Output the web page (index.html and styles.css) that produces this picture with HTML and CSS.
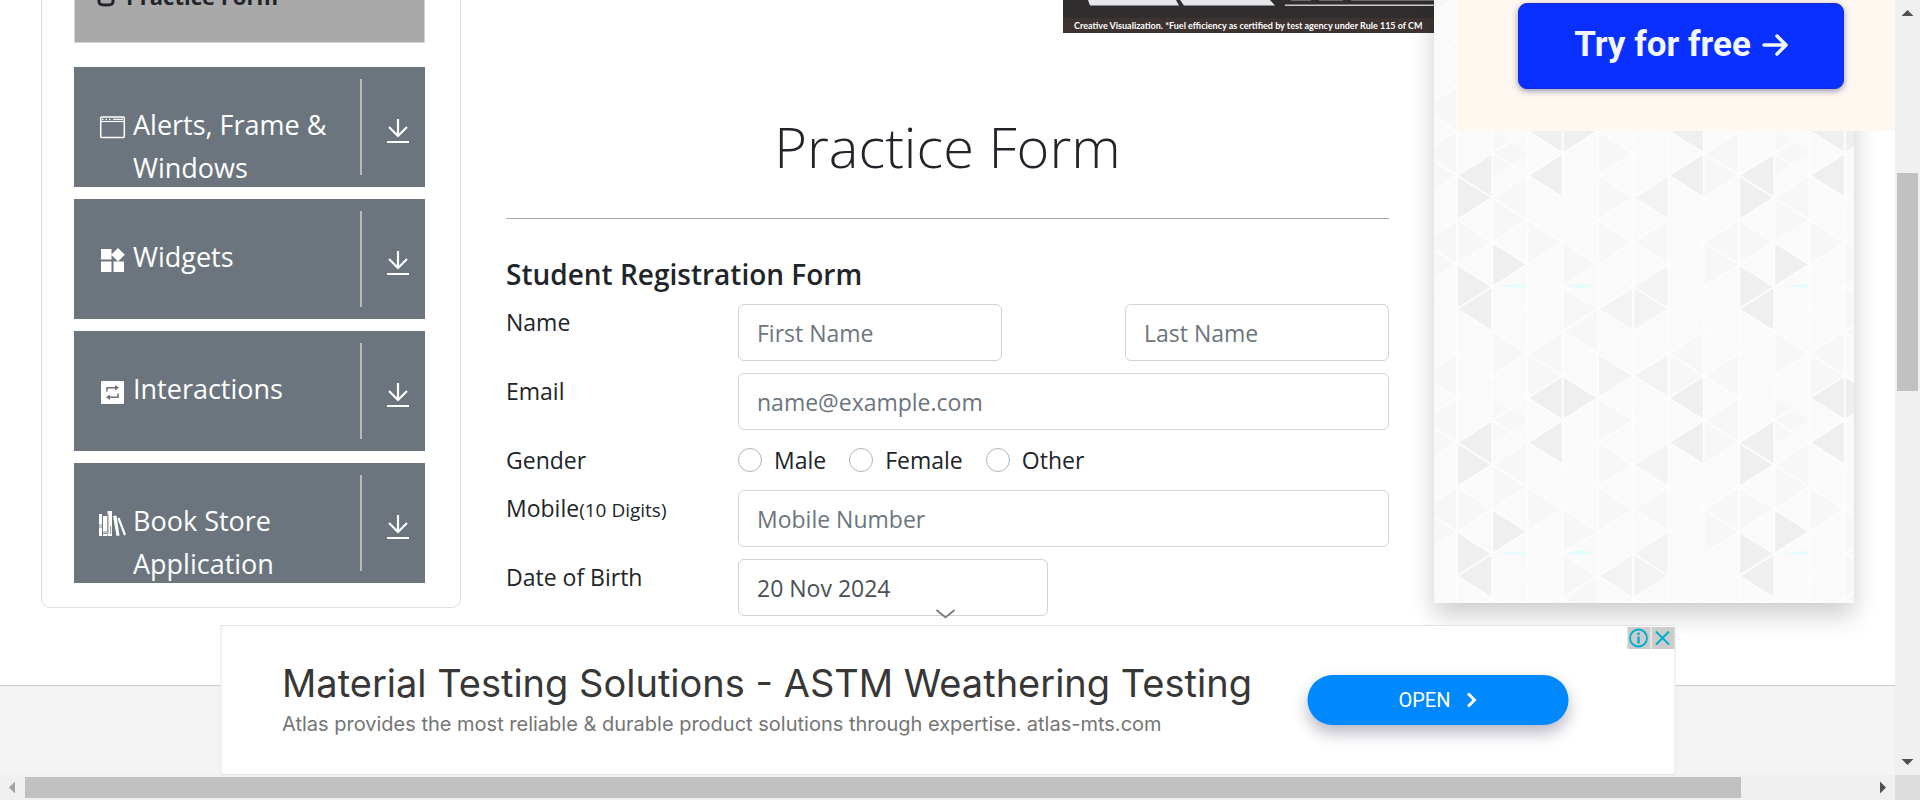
FILE: index.html
```html
<!DOCTYPE html>
<html lang="en">
<head>
<meta charset="utf-8">
<title>Practice Form</title>
<link rel="stylesheet" href="styles.css">
</head>
<body>
<svg class="defs" aria-hidden="true">
  <symbol id="download" viewBox="0 0 24 26" fill="none" stroke="currentColor">
    <path stroke-width="2.2" d="M12 1v17M3 9l9 9 9-9M1 24h22"/>
  </symbol>
</svg>
<div class="window">
  <div class="page">
    <div class="layout">
      <aside class="sidebar">
        <a class="current" href="#">
          <svg class="current-icon" viewBox="0 0 18 26"><path fill="none" stroke="currentColor" stroke-width="3" d="M2 4v17c0 4 14 4 14 0V4c0-3-14-3-14 0c0 4 14 4 14 0"/></svg>
          Practice Form
        </a>
        <nav class="groups">
          <button class="group" type="button">
            <svg class="group-icon" viewBox="0 0 28 28"><rect x="2.700" y="4" width="23.600" height="20.400" rx="1" fill="none" stroke="#fff" stroke-width="1.500"/><path fill="none" stroke="#fff" d="M3 8.500h23" stroke-width="1.200"/><path fill="none" stroke="#fff" stroke-width="1.200" stroke-dasharray="1.500 2" d="M4 6.300h9"/><path stroke="#fff" stroke-width="1.200" d="M15 6.300h10"/></svg>
            <span class="group-name">Alerts, Frame &amp; Windows</span>
            <span class="group-toggle"><svg class="download"><use href="#download"/></svg></span>
          </button>
          <button class="group" type="button">
            <svg class="group-icon" viewBox="0 0 28 28" fill="#fff"><path d="M3 4h10.500v10.500H3zM3 16.500h10.500v10.500H3zM15.500 16.500h10.500v10.500H15.500zM20 3l6.800 6.800-6.800 6.800-6.800-6.800z"/></svg>
            <span class="group-name">Widgets</span>
            <span class="group-toggle"><svg class="download"><use href="#download"/></svg></span>
          </button>
          <button class="group" type="button">
            <svg class="group-icon" viewBox="0 0 28 28"><rect x="3" y="4" width="23" height="23" rx="1" fill="#fff"/><g fill="none" stroke="#6c757d" stroke-width="1.600"><path d="M9 14.500v-3.700h9.500M20 16.500v3.700h-9.500"/></g><path fill="#6c757d" d="M17 8l4 2.800-4 2.800zM12 17.400l-4 2.800 4 2.800z"/></svg>
            <span class="group-name">Interactions</span>
            <span class="group-toggle"><svg class="download"><use href="#download"/></svg></span>
          </button>
          <button class="group" type="button">
            <svg class="group-icon" viewBox="0 0 28 28"><path fill="#fff" d="M1 5h3v22H1zM5 7h4v20H5zM9.500 2h4.500v25H9.500zM15 7l3.500-.5 3 20-3 .5zM19.500 9.500l2-1 6.500 17-2 1z"/><path stroke="#6c757d" stroke-width=".8" d="M1 16h3M1 18h3M5 23h4M10 4.500v20M12.600 17v8M5 24.500h4"/></svg>
            <span class="group-name">Book Store Application</span>
            <span class="group-toggle"><svg class="download"><use href="#download"/></svg></span>
          </button>
        </nav>
      </aside>

      <main class="main">
        <div class="banner">
          <svg class="banner-art" viewBox="0 0 371 18" preserveAspectRatio="xMinYMin slice">
            <rect width="371" height="18" fill="#302d2e"/>
            <path fill="#e6e7ea" d="M25 0h88l3 5.500H27zM117 0h90l5 5.500H121z"/>
            <path stroke="#c9c9c9" stroke-width="1.500" d="M222 5.200h149"/>
            <path stroke="#6d6a68" d="M228 .5h20M256 .5h24M288 .5h83"/>
          </svg>
          <p class="banner-note">Creative Visualization. *Fuel efficiency as certified by test agency under Rule 115 of CM</p>
        </div>
        <h1 class="title">Practice Form</h1>
        <form class="form">
          <h2 class="subtitle">Student Registration Form</h2>
          <div class="row">
            <label for="first">Name</label>
            <div class="names">
              <input class="field" id="first" type="text" placeholder="First Name">
              <input class="field" type="text" placeholder="Last Name" aria-label="Last Name">
            </div>
          </div>
          <div class="row">
            <label for="email">Email</label>
            <input class="field" id="email" type="email" placeholder="name@example.com">
          </div>
          <div class="row">
            <span>Gender</span>
            <div class="choices">
              <label class="choice"><input type="radio" name="gender">Male</label>
              <label class="choice"><input type="radio" name="gender">Female</label>
              <label class="choice"><input type="radio" name="gender">Other</label>
            </div>
          </div>
          <div class="row">
            <label for="mobile">Mobile<small>(10 Digits)</small></label>
            <input class="field" id="mobile" type="text" placeholder="Mobile Number">
          </div>
          <div class="row">
            <label for="birth">Date of Birth</label>
            <input class="field date" id="birth" type="text" value="20 Nov 2024">
          </div>
        </form>
      </main>

      <aside class="side-ad">
        <svg class="texture" aria-hidden="true">
          <defs>
            <pattern id="facets" width="282" height="267" patternUnits="userSpaceOnUse" patternTransform="translate(23 131)">
              <rect width="282" height="267" fill="#fafafa"/>
              <g transform="scale(35.250 22.250)">
                <path fill="#f7f7f7" d="M1 0l1 1-1 1zM2 2v2l-1-1zM4 0l1 1-1 1zM4 2l1 1-1 1zM4 4l1 1-1 1zM6 4v2l-1-1zM8 4v2l-1-1zM8 0v2l-1-1zM0 4l1 1-1 1zM2 4l1 1-1 1zM3 5l1 1-1 1zM7 5l1 1-1 1zM1 9l1 1-1 1zM3 9v2l-1-1zM7 9v2l-1-1zM6 10l1 1-1 1zM2 10l1 1-1 1zM4 8v2l-1-1zM7 1l1 1-1 1zM1 3l1 1-1 1zM8 10v2l-1-1zM3 7l1 1-1 1zM6 4v2l-1-1z"/>
                <path fill="#f3f3f3" d="M6 2v2l-1-1zM6 6v2l-1-1zM5 7v2l-1-1zM5 7l1 1-1 1zM4 10l1 1-1 1zM6 10v2l-1-1z"/>
                <path fill="#efefef" d="M1 1v2L0 2zM0 2l1 1-1 1zM3 1v2L2 2zM7 1v2L6 2zM1 5l1 1-1 1zM0 6l1 1-1 1zM1 7v2L0 8zM3 0v1L2 0zM3 11v1H2zM3 0v1l1-1zM3 11v1h1zM7 0v1L6 0zM7 11v1H6z"/>
              </g>
              <path fill="none" stroke="#fdfdfd" stroke-width="2" d="M0 0v267M35.250 0v267M70.500 0v267M105.750 0v267M141 0v267M176.250 0v267M211.500 0v267M246.750 0v267M282 0v267M0 0L282 178M0 44.500L282 222.500M0 89L282 267M0 133.500L211.500 267M0 178L141 267M0 222.500L70.500 267M70.500 0L282 133.500M141 0L282 89M211.500 0L282 44.500M282 0L0 178M282 44.500L0 222.500M282 89L0 267M282 133.500L70.500 267M282 178L141 267M282 222.500L211.500 267M211.500 0L0 133.500M141 0L0 89M70.500 0L0 44.500"/>
              <path fill="#e4fcfc" d="M42 155l27-2v4zM110 155l15-3 15 3-15 2z"/>
            </pattern>
          </defs>
          <rect width="100%" height="100%" fill="url(#facets)"/>
        </svg>
        <div class="offer">
          <a class="offer-link" href="#">Try for free
            <svg class="offer-arrow" viewBox="0 0 26 22" fill="none" stroke="currentColor" stroke-width="3.500" stroke-linecap="round" stroke-linejoin="round"><path d="M2 11h21M15 2l9 9-9 9"/></svg>
          </a>
        </div>
      </aside>
    </div>
    <footer class="footer"></footer>

    <section class="anchor-ad">
      <button class="collapse" type="button" aria-label="Collapse ad"><svg viewBox="0 0 20 10" fill="none" stroke="#777" stroke-width="1.700"><path d="M1 1l9 7.500L19 1"/></svg></button>
      <div class="anchor-copy">
        <p class="anchor-title">Material Testing Solutions - ASTM Weathering Testing</p>
        <p class="anchor-text">Atlas provides the most reliable &amp; durable product solutions through expertise. atlas-mts.com</p>
      </div>
      <a class="open" href="#">OPEN <svg class="open-arrow" viewBox="0 0 10 16" fill="none" stroke="#fff" stroke-width="3"><path d="M1.500 1.500L8 8l-6.500 6.500"/></svg></a>
      <div class="ad-controls">
        <button type="button" aria-label="Ad information"><svg viewBox="0 0 22 22" fill="none" stroke="#00aecd" stroke-width="1.800"><circle cx="11" cy="11" r="8.500"/><path stroke-width="2.400" d="M11 9.500v7M11 5.500v2.400"/></svg></button>
        <button type="button" aria-label="Close ad"><svg viewBox="0 0 22 22" fill="none" stroke="#00aecd" stroke-width="2"><path d="M4.500 4.500l13 13M17.500 4.500l-13 13"/></svg></button>
      </div>
    </section>
  </div>

  <div class="bar bar-vertical">
    <svg class="bar-arrow" viewBox="0 0 25 25"><path fill="#505050" d="M12.500 10l6 6h-12z"/></svg>
    <div class="space-before"></div><div class="thumb-vertical"></div><div class="space-after"></div>
    <svg class="bar-arrow" viewBox="0 0 25 25"><path fill="#505050" d="M12.500 15l6-6h-12z"/></svg>
  </div>
  <div class="bar bar-horizontal">
    <svg class="bar-arrow" viewBox="0 0 25 25"><path fill="#a3a3a3" d="M9 12.500l6-6v12z"/></svg>
    <div class="thumb-horizontal"></div><div class="space-end"></div>
    <svg class="bar-arrow" viewBox="0 0 25 25"><path fill="#505050" d="M16 12.500l-6-6v12z"/></svg>
  </div>
  <div class="corner"></div>
</div>
</body>
</html>
```
FILE: styles.css
```css
* { box-sizing: border-box; }
body {
  margin: 0;
  font-family: "Open Sans", "Noto Sans", sans-serif;
  font-size: 23px;
  line-height: 36px;
  color: #212529;
  background: #fff;
}
p, h1, h2 { margin: 0; }
button { font: inherit; color: inherit; border: 0; padding: 0; background: none; text-align: left; cursor: pointer; }
a { color: inherit; text-decoration: none; }
svg { display: block; }
.defs { position: absolute; width: 0; height: 0; }

.window {
  display: grid;
  grid-template: minmax(0, 1fr) 25px / minmax(0, 1fr) 25px;
  height: 100vh;
}
.page {
  position: relative;
  display: flex;
  flex-direction: column;
  overflow: hidden;
}
.layout {
  display: grid;
  grid-template-columns: 420px minmax(0, 1fr) 420px;
  column-gap: 45px;
  align-items: start;
  padding: 0 41px 69px;
}

/* Sidebar */
.sidebar {
  padding: 0 35px 24px 32px;
  border: 1px solid #dfdfdf;
  border-top: 0;
  border-radius: 0 0 9px 9px;
}
.current {
  display: flex;
  gap: 11px;
  margin-top: -53px;
  padding: 30px 22px 28px;
  border: 1px solid #d3d3de;
  background: #a9a9a9;
  font-size: 22px;
  font-weight: 700;
}
.current-icon { width: 18px; height: 26px; margin-top: 3px; }
.groups { display: grid; gap: 12px; margin-top: 24px; }
.group {
  display: flex;
  align-items: flex-start;
  gap: 8px;
  height: 120px;
  padding-left: 24px;
  overflow: hidden;
  color: #fff;
  background: #6c757d;
  font-size: 27px;
  line-height: 43px;
}
.group-icon { flex: none; width: 28px; height: 28px; margin-top: 46px; }
.group-name { flex: 1; margin: 36px 0 0 -1px; }
.group-toggle {
  display: flex;
  align-items: center;
  justify-content: flex-end;
  width: 65px;
  height: 96px;
  margin-top: 12px;
  padding: 8px 15px 0 0;
  border-left: 2px solid #b9b9b5;
}
.download { width: 24px; height: 26px; }

/* Main column */
.banner {
  width: 371px;
  height: 33px;
  margin: 0 -45px 0 auto;
  overflow: hidden;
  background: #3d3432;
}
.banner-art { width: 100%; height: 18px; }
.banner-note {
  padding-left: 11px;
  color: #fff;
  font-family: Lato, sans-serif;
  font-size: 9px;
  font-weight: 700;
  line-height: 15px;
  white-space: nowrap;
}
.title {
  margin-top: 77px;
  padding-bottom: 36px;
  border-bottom: 1px solid #a8aaac;
  font-size: 56px;
  font-weight: 300;
  line-height: 72px;
  text-align: center;
}
.form { display: grid; gap: 12px; padding-top: 38px; }
.subtitle { font-size: 28px; font-weight: 600; line-height: 35px; }
.row { display: grid; grid-template-columns: 232px minmax(0, 1fr); }
small { font-size: 19px; line-height: 1; }
.names { display: flex; justify-content: space-between; }
.names .field { width: 264px; }
.field {
  width: 100%;
  height: 57px;
  padding: 0 18px;
  border: 1px solid #ced4da;
  border-radius: 6px;
  background: #fff;
  color: #495057;
  font: inherit;
}
.field::placeholder { color: #6c757d; opacity: 1; }
.row .date { width: 310px; }
.choices { display: flex; gap: 23px; }
.choice { display: flex; gap: 12px; }
.choice input {
  appearance: none;
  width: 24px;
  height: 24px;
  margin: 6px 0 0;
  border: 1px solid #adb5bd;
  border-radius: 50%;
  background: #fff;
}

/* Right-hand advertisement */
.side-ad {
  position: relative;
  height: 603px;
  padding-left: 23px;
  box-shadow: 0 12px 24px rgba(0, 0, 0, .2);
}
.texture { position: absolute; inset: 0; width: 100%; height: 100%; }
.offer {
  position: relative;
  width: 450px;
  height: 131px;
  padding: 3px 0 0 61px;
  background: #fff8f0;
}
.offer-link {
  display: flex;
  align-items: center;
  justify-content: center;
  gap: 11px;
  width: 326px;
  height: 86px;
  padding-bottom: 3px;
  border: 1px solid #1a2cd0;
  border-radius: 9px;
  background: #0a30ff;
  box-shadow: 0 2px 6px rgba(40, 50, 130, .5);
  color: #f2f6ff;
  font-family: Roboto, sans-serif;
  font-size: 35px;
  font-weight: 700;
}
.offer-arrow { width: 26px; height: 22px; }

.footer { flex: 1; border-top: 1px solid #c8c9c9; background: #f4f4f4; }

/* Anchored advertisement, lies over the page */
.anchor-ad {
  position: absolute;
  bottom: 0;
  left: 50%;
  transform: translateX(-50%);
  display: flex;
  align-items: center;
  width: 1455px;
  height: 150px;
  padding: 0 106px 0 61px;
  border: 1px solid #e3e3e3;
  background: #fff;
}
.anchor-copy { flex: 1; padding-top: 2px; }
.anchor-title { color: #373737; font-family: Inter, sans-serif; font-size: 38px; line-height: 46px; white-space: nowrap; }
.anchor-text { color: #757575; font-family: Inter, sans-serif; font-size: 20px; line-height: 36px; white-space: nowrap; }
.open {
  display: flex;
  align-items: center;
  justify-content: center;
  gap: 16px;
  width: 261px;
  height: 50px;
  border-radius: 25px;
  background: #08f;
  box-shadow: 0 8px 16px rgba(20, 20, 60, .3);
  color: #fff;
  font-family: Roboto, sans-serif;
  font-size: 20px;
}
.open-arrow { width: 10px; height: 16px; }
.ad-controls { position: absolute; top: 1px; right: 0; display: flex; gap: 1px; }
.ad-controls button { width: 23px; height: 22px; padding: 0; background: #ccc; }
.ad-controls svg { width: 22px; height: 22px; }
.collapse { position: absolute; top: -17px; left: 714px; width: 20px; height: 10px; }

/* Window scroll bars */
.bar { display: flex; background: #f0f0f0; }
.bar-arrow { flex: none; width: 25px; height: 25px; }
.bar-vertical { flex-direction: column; }
.space-before { flex: 148; }
.thumb-vertical { flex: 218; margin: 0 2px; background: #c1c1c1; }
.space-after { flex: 359; }
.thumb-horizontal { flex: 1716; margin: 2px 0; background: #c1c1c1; }
.space-end { flex: 129; }
.corner { background: #dcdcdc; }
```
